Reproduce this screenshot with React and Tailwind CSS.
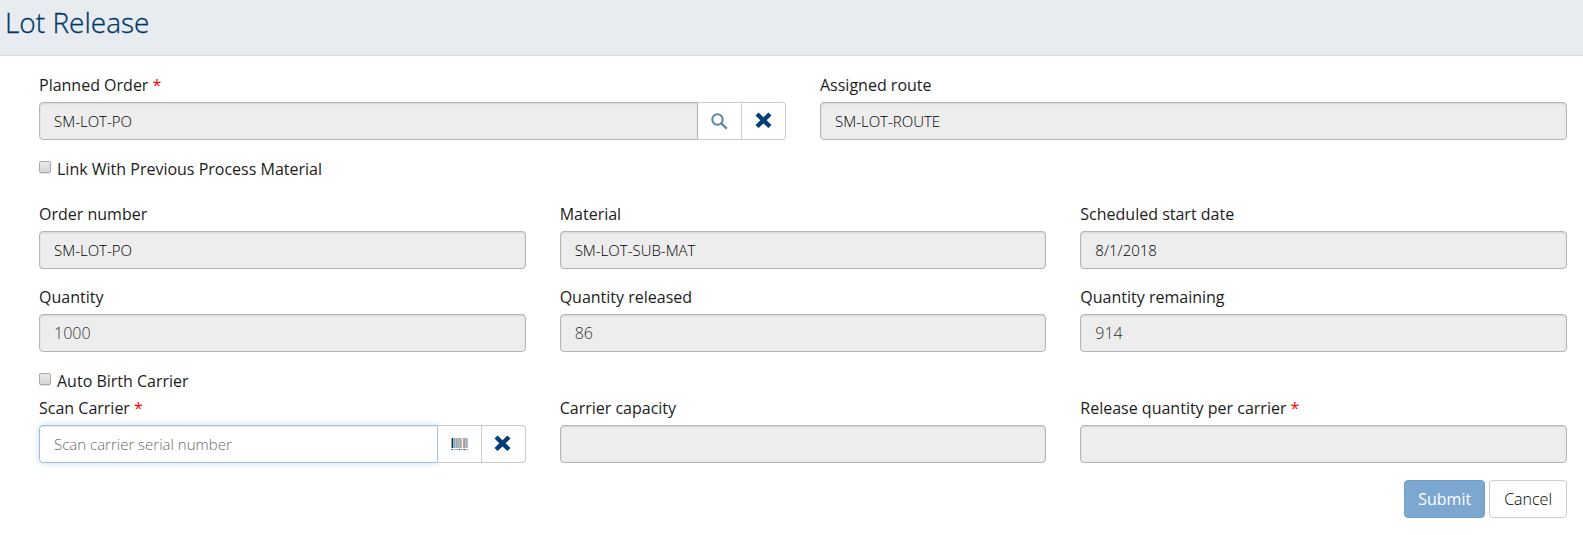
import { useId } from "react";

function SearchIcon() {
  return (
    <svg width="17" height="17" viewBox="0 0 17 17" fill="none" stroke="#5f86ae" aria-hidden="true">
      <circle cx="6.5" cy="6.5" r="5.2" strokeWidth="2" />
      <path d="M10.3 10.3 15.8 15.6" strokeWidth="2.4" />
    </svg>
  );
}

function RemoveIcon() {
  return (
    <svg width="18" height="18" viewBox="0 0 18 18" fill="#053d76" aria-hidden="true">
      <path d="M3.6.4 8.5 5.2 13.4.4 16.5 3.5 11.7 8.2l4.8 4.8-3.1 3.1-4.9-4.7-4.9 4.7L.5 13 5.3 8.2.5 3.5Z" />
    </svg>
  );
}

const bars = [
  [0, "#c09a82"], [1, "#12355c"], [2, "#6fbdf0"], [3, "#b5a08c"], [4, "#8fd0fa"],
  [5, "#d09a70"], [6, "#8fc4ee"], [7, "#d09a70"], [8, "#8fd0fa"], [9, "#c09a78"],
  [10, "#8fd0fa"], [11, "#f3eef0"], [12, "#d0a080"], [13, "#c09078"], [14, "#8fd0fa"],
  [15, "#d0a080"], [16, "#8fc7ee"],
];

function BarcodeIcon() {
  return (
    <svg width="17" height="12" viewBox="0 0 17 12" shapeRendering="crispEdges" aria-hidden="true">
      {bars.map(([x, fill]) => (
        <rect key={x} x={x} y="0" width="1" height="10" fill={fill} />
      ))}
      <path d="M0 11.5h1M3 11.5h5M9 11.5h4M14 11.5h3" stroke="#9db3c6" />
      <path d="M1 11.5h1M8 11.5h1M13 11.5h1" stroke="#12355c" />
    </svg>
  );
}

const labelText = "text-base leading-[23px] font-medium text-[#1c1c1c]";

function Label({ htmlFor, required, children }) {
  return (
    <label htmlFor={htmlFor} className={`mb-[5px] block ${labelText}`}>
      {children}
      {required && <span className="text-[#ff0000]"> *</span>}
    </label>
  );
}

const inputBase = "h-[38px] w-full min-w-0 border px-[14px] font-light outline-none";
const inputGrey = "border-[#b3b5b8] bg-[#ededed] shadow-[inset_0_1px_2px_rgba(0,0,0,0.1)]";
const inputActive =
  "border-[#a3bfdb] bg-white placeholder:text-[#6b6b6b] shadow-[inset_0_1px_1px_rgba(0,0,0,0.08),0_0_6px_rgba(102,175,233,0.4)]";

function Field({ label, value = "", required, numeric }) {
  const id = useId();
  return (
    <div>
      <Label htmlFor={id} required={required}>{label}</Label>
      <input
        id={id}
        type="text"
        readOnly
        value={value}
        className={`${inputBase} ${inputGrey} rounded ${numeric ? "text-base text-[#333333]" : "text-[15px] text-black"}`}
      />
    </div>
  );
}

function PickerField({ label, value, placeholder, icon, actionLabel, active }) {
  const id = useId();
  const button = "flex h-[38px] w-11 shrink-0 items-center justify-center border border-[#cccccc] bg-white";
  return (
    <div>
      <Label htmlFor={id} required>{label}</Label>
      <div className="flex">
        <input
          id={id}
          type="text"
          readOnly={!active}
          defaultValue={value}
          placeholder={placeholder}
          className={`${inputBase} rounded-l text-[15px] text-black ${active ? inputActive : inputGrey}`}
        />
        <button type="button" aria-label={actionLabel} className={`${button} border-l-0`}>{icon}</button>
        <button type="button" aria-label="Clear" className={`${button} rounded-r border-l-0`}>
          <RemoveIcon />
        </button>
      </div>
    </div>
  );
}

function Checkbox({ children }) {
  return (
    <label className={`flex items-start gap-[6px] ${labelText}`}>
      <input
        type="checkbox"
        className="mt-[3px] size-3 shrink-0 appearance-none rounded-[2px] border border-[#a8a8a8] bg-linear-to-b from-[#e8e8e8] to-[#d8d8d8] shadow-[0_1px_1px_rgba(0,0,0,0.12)] checked:from-[#5f86ae] checked:to-[#053d76]"
      />
      {children}
    </label>
  );
}

export default function App() {
  return (
    <div className="bg-white font-['Open_Sans',sans-serif]">
      <header className="border-b border-[#d9dde0] bg-[#e8ecf1] px-[5px] pt-[3px] pb-[14px]">
        <h1 className="text-[28px] leading-[38px] font-light text-[#003865] [-webkit-text-stroke:0.3px]">Lot Release</h1>
      </header>
      <form className="pt-[18px] pr-4 pb-4 pl-[39px]" onSubmit={(e) => e.preventDefault()}>
        <div className="grid grid-cols-2 gap-x-[34px]">
          <PickerField label="Planned Order" value="SM-LOT-PO" icon={<SearchIcon />} actionLabel="Search" />
          <Field label="Assigned route" value="SM-LOT-ROUTE" />
        </div>
        <div className="mt-[18px] mb-[22px]">
          <Checkbox>Link With Previous Process Material</Checkbox>
        </div>
        <div className="grid grid-cols-3 gap-x-[34px] gap-y-[17px]">
          <Field label="Order number" value="SM-LOT-PO" />
          <Field label="Material" value="SM-LOT-SUB-MAT" />
          <Field label="Scheduled start date" value="8/1/2018" />
          <Field label="Quantity" value="1000" numeric />
          <Field label="Quantity released" value="86" numeric />
          <Field label="Quantity remaining" value="914" numeric />
        </div>
        <div className="mt-[18px] mb-1">
          <Checkbox>Auto Birth Carrier</Checkbox>
        </div>
        <div className="grid grid-cols-3 gap-x-[34px]">
          <PickerField
            label="Scan Carrier"
            placeholder="Scan carrier serial number"
            icon={<BarcodeIcon />}
            actionLabel="Scan barcode"
            active
          />
          <Field label="Carrier capacity" />
          <Field label="Release quantity per carrier" required />
        </div>
        <div className="mt-[17px] flex justify-end gap-1">
          <button type="submit" className="h-[38px] rounded border border-[#72a0ca] bg-[#7ba7d0] px-[13px] text-base text-white">
            Submit
          </button>
          <button type="button" className="h-[38px] rounded border border-[#cccccc] bg-white px-[14px] text-base font-light text-black">
            Cancel
          </button>
        </div>
      </form>
    </div>
  );
}
